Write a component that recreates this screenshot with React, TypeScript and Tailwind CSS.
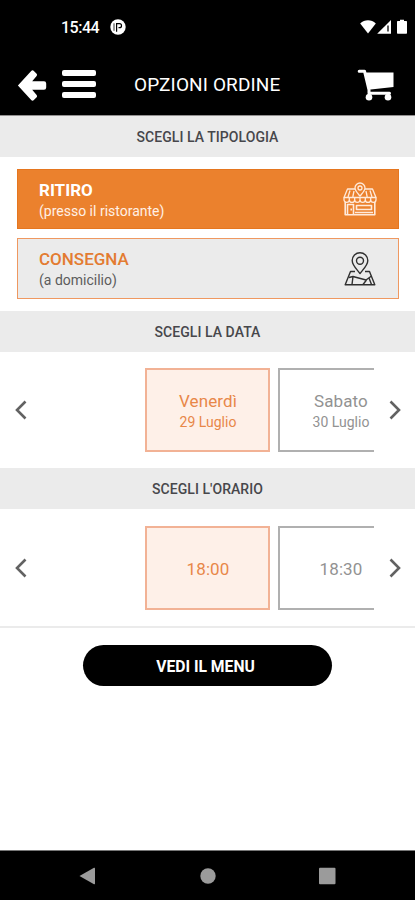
import React from "react";

function StatusBar() {
  return (
    <div className="flex h-[54px] items-center pl-[61px] pr-[7px] text-white">
      <span className="pt-px text-[16px] font-medium leading-none tracking-[-0.5px]">15:44</span>
      <svg className="ml-[11px]" width="16" height="16" viewBox="0 0 16 16">
        <circle cx="8" cy="8" r="7.7" fill="#fff" />
        <path d="M6.600 12.800V4.700h2.900a2 2 0 0 1 0 4H8.500" fill="none" stroke="#000" strokeWidth="1.200" />
        <path d="M4 4.300v7.500" stroke="#000" strokeWidth="0.8" />
      </svg>
      <svg className="ml-auto" width="48" height="16" viewBox="0 0 48 16" fill="#fff">
        <path d="M0.200 4.600C4.500 .2 11.500 .2 15.800 4.600L8 14.500Z" />
        <path d="M17.200 14.700 31 1v13.700Z" />
        <path d="M28 6.500v6" stroke="#000" strokeWidth="1.300" />
        <path d="M37.700 2h2.300V.7h4V2h2.300a.7 .7 0 0 1 .7 .7v11.300a.7 .7 0 0 1-.7 .7h-8.600a.7 .7 0 0 1-.7-.7V2.700a.7 .7 0 0 1 .7-.7Z" />
      </svg>
    </div>
  );
}

function Header() {
  return (
    <div className="flex h-[61px] items-center pl-[17px] pr-[21px] text-white">
      <svg width="30" height="32" viewBox="0 0 30 32" fill="#fff">
        <path d="M.9 16.500 14.200 1.900Q15.500 .6 16.900 1.900L19.400 4.400Q20.700 5.700 19.400 7.200L15.200 12.200H27a2.200 2.200 0 0 1 2.200 2.200v4.200a2.200 2.200 0 0 1-2.200 2.200H15.200L19.400 25.800Q20.700 27.300 19.400 28.600L16.900 31.100Q15.500 32.400 14.200 31.100Z" />
      </svg>
      <div className="ml-[15px] flex w-[34px] flex-col gap-[5px] pb-[2px]">
        <div className="h-[6px] rounded-[2px] bg-white" />
        <div className="h-[6px] rounded-[2px] bg-white" />
        <div className="h-[6px] rounded-[2px] bg-white" />
      </div>
      <h1 className="ml-[38px] whitespace-nowrap text-[19px] leading-none tracking-[0.13px]">OPZIONI ORDINE</h1>
      <svg className="ml-auto" width="37" height="32" viewBox="0 0 37 32">
        <path d="M2.200 2.200h5.300L12 21v3.300h20.500" fill="none" stroke="#fff" strokeWidth="3" strokeLinecap="round" strokeLinejoin="round" />
        <path d="M8 3.500H36.500v14.500L11.500 20.700Z" fill="#fff" />
        <circle cx="12" cy="28.300" r="3.300" fill="#fff" />
        <circle cx="31" cy="28.300" r="3.300" fill="#fff" />
        <path d="M12 25v3M31 24v4" stroke="#fff" strokeWidth="3" />
      </svg>
    </div>
  );
}

function Band({ children }: { children: React.ReactNode }) {
  return (
    <div className="flex h-[41px] items-center justify-center bg-[#ebebeb] pt-[2px] text-[14px] font-medium tracking-[0.05px] text-[#47474b]">
      {children}
    </div>
  );
}

function StoreIcon() {
  return (
    <svg width="34" height="34" viewBox="0 0 34 34" fill="none" stroke="#ffeadb" strokeWidth="1.300" strokeLinejoin="round">
      <path d="M12 7H4.500L1 15.500h32L29.500 7H22" />
      <path d="M17 14c-2.500-3-5-5.300-5-8a5 5 0 0 1 10 0c0 2.700-2.500 5-5 8Z" />
      <circle cx="17" cy="6" r="2" />
      <path d="M7 8.500 5 15M11 9l-1.200 6M23 9l1.200 6M27 8.500l2 6.500" />
      <path d="M1 15.500v2.200a2.650 2.650 0 0 0 5.300 0 2.650 2.650 0 0 0 5.400 0 2.650 2.650 0 0 0 5.300 0 2.650 2.650 0 0 0 5.300 0 2.650 2.650 0 0 0 5.400 0 2.650 2.650 0 0 0 5.300 0v-2.200M6.300 15.500v2.500M11.700 15.500v2.500M17 15.500v2.500M22.300 15.500v2.500M27.700 15.500v2.500" />
      <path strokeWidth="1.600" d="M2.200 20v12.700h29.600V20M4.500 32V22.500h6V32M13.500 23.500h15v4h-15ZM12 30.500h18M8.200 26.500v2" />
    </svg>
  );
}

function MapIcon() {
  return (
    <svg width="32" height="34" viewBox="0 0 32 34" fill="none" stroke="#303030" strokeWidth="1.400" strokeLinejoin="round">
      <path d="M16 21.500C12.500 17 8.200 13.200 8.200 8.500a7.800 7.800 0 0 1 15.600 0c0 4.700-4.300 8.500-7.800 13Z" />
      <circle cx="16" cy="8.700" r="3.500" />
      <path d="M11 19.500H6.500L1.200 32.800h29.600L25.500 19.500H21" />
      <path d="M5 25.500 9 24.500l13 3.500 5.500-4M9 24.500 8 32.500M25 26l2.500 6.500M22.500 28l-3.500 4.500" />
    </svg>
  );
}

function Chevron({ right = false }: { right?: boolean }) {
  return (
    <svg width="12" height="20" viewBox="0 0 12 20" fill="none" stroke="#626262" strokeWidth="2.600">
      <path d={right ? "M1.500 1.500 10 10l-8.500 8.500" : "M10.500 1.500 2 10l8.500 8.500"} />
    </svg>
  );
}

function Slot({ title, sub, active = false }: { title: string; sub?: string; active?: boolean }) {
  return (
    <div
      className={
        "flex h-[84px] w-[125px] shrink-0 flex-col items-center justify-center border-2 pl-px pt-[3px] " +
        (active ? "border-[#f2b295] bg-[#fef0e8] text-[#e88748]" : "border-[#b0b0b0] bg-white text-[#929292]")
      }
    >
      <div className="text-[17px] leading-[21px] tracking-[0.1px]">{title}</div>
      {sub && <div className="text-[14px] leading-[20px]">{sub}</div>}
    </div>
  );
}

function Carousel({ children }: { children: React.ReactNode }) {
  return (
    <div className="flex items-center pl-[15px] pr-[14px]">
      <Chevron />
      <div className="ml-[118px] flex w-[229px] gap-[8px] overflow-hidden">{children}</div>
      <div className="ml-auto flex">
        <Chevron right />
      </div>
    </div>
  );
}

export default function App() {
  return (
    <div className="flex h-[900px] w-[415px] flex-col overflow-hidden bg-white font-[Roboto,sans-serif]">
      <div className="h-[115px] shrink-0 bg-black">
        <StatusBar />
        <Header />
      </div>
      <div className="h-px shrink-0 bg-[#929090]" />
      <Band>SCEGLI LA TIPOLOGIA</Band>
      <div className="flex flex-col gap-[9px] pb-[12px] pl-[17px] pr-[16px] pt-[12px]">
        <div className="flex h-[60px] items-center justify-between border border-[#e5761f] bg-[#eb812d] pl-[21px] pr-[21px] text-white">
          <div className="pt-[2px]">
            <div className="text-[17px] font-bold leading-[21px]">RITIRO</div>
            <div className="text-[14px] leading-[20px] text-[#fff0e5]">(presso il ristorante)</div>
          </div>
          <StoreIcon />
        </div>
        <div className="flex h-[61px] items-center justify-between border border-[#ef9860] bg-[#ebebeb] pl-[21px] pr-[22px]">
          <div className="pt-[2px]">
            <div className="text-[17px] font-medium leading-[21px] text-[#e37b31]">CONSEGNA</div>
            <div className="text-[14px] leading-[20px] text-[#5c5c5c]">(a domicilio)</div>
          </div>
          <MapIcon />
        </div>
      </div>
      <Band>SCEGLI LA DATA</Band>
      <div className="h-[116px] pt-[16px]">
        <Carousel>
          <Slot title="Venerdì" sub="29 Luglio" active />
          <Slot title="Sabato" sub="30 Luglio" />
        </Carousel>
      </div>
      <Band>SCEGLI L'ORARIO</Band>
      <div className="h-[119px] border-b-2 border-[#ebebeb] pt-[17px]">
        <Carousel>
          <Slot title="18:00" active />
          <Slot title="18:30" />
        </Carousel>
      </div>
      <button className="ml-[83px] mt-[17px] flex h-[41px] w-[249px] items-center justify-center rounded-full bg-black pt-[3px] pr-[4px] text-[15.700px] font-bold text-white">
        VEDI IL MENU
      </button>
      <div className="mt-auto flex h-[50px] shrink-0 items-center border-t border-[#777] bg-black pl-[79px] pr-[79px]">
        <svg width="257" height="18" viewBox="0 0 257 18" fill="#9b9b9b">
          <path d="M.5 9 15 .8a.7 .7 0 0 1 1 .6v15.200a.7 .7 0 0 1-1 .6Z" />
          <circle cx="129" cy="9" r="7.700" />
          <rect x="240" y=".7" width="16.500" height="16.500" rx="1" />
        </svg>
      </div>
    </div>
  );
}
